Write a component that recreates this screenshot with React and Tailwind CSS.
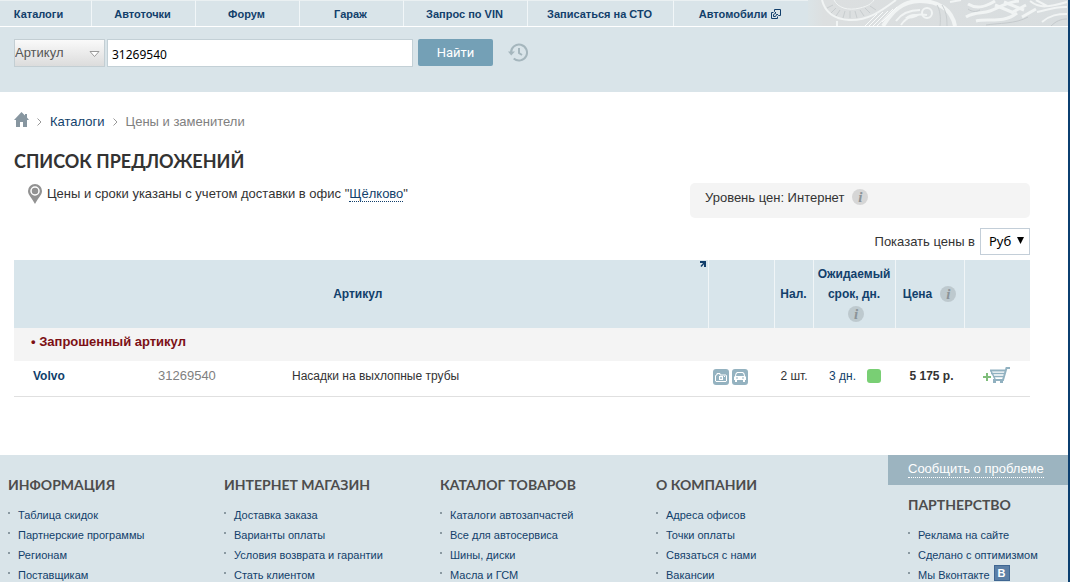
const navItems = [
  { label: "Каталоги", width: "w-[92px] pr-[14px]" },
  { label: "Автоточки", width: "w-[104px]" },
  { label: "Форум", width: "w-[104px]" },
  { label: "Гараж", width: "w-[104px]" },
  { label: "Запрос по VIN", width: "w-[124px]" },
  { label: "Записаться на СТО", width: "w-[146px]" },
  { label: "Автомобили", width: "w-[134px]", external: true },
];

const footerColumns = [
  {
    title: "Информация",
    links: ["Таблица скидок", "Партнерские программы", "Регионам", "Поставщикам"],
  },
  {
    title: "Интернет магазин",
    links: ["Доставка заказа", "Варианты оплаты", "Условия возврата и гарантии", "Стать клиентом"],
  },
  {
    title: "Каталог товаров",
    links: ["Каталоги автозапчастей", "Все для автосервиса", "Шины, диски", "Масла и ГСМ"],
  },
  {
    title: "О компании",
    links: ["Адреса офисов", "Точки оплаты", "Связаться с нами", "Вакансии"],
  },
];

const partnerLinks = ["Реклама на сайте", "Сделано с оптимизмом", "Мы Вконтакте"];

function ExternalIcon() {
  return (
    <svg className="w-[10px] h-[10px]" viewBox="0 0 10 10" fill="none" stroke="#123f6b">
      <path d="M3.500 2.500v-2h6v6h-2" />
      <path d="M2.500 3.500h-2v6h6v-2" />
      <path d="M2.500 7.500v-2L5 4 3.500 2.500M7.500 6.500 6 5 4.500 7.500h-2" />
    </svg>
  );
}

function InfoButton() {
  return (
    <button
      type="button"
      aria-label="Подробнее"
      className="inline-flex items-center justify-center w-4 h-4 rounded-full bg-[#000000]/12 font-['Liberation_Serif',serif] font-bold italic text-[15px] leading-4 text-[#8b9398]"
    >
      i
    </button>
  );
}

function HistoryIcon() {
  return (
    <svg className="w-5 h-[19px]" viewBox="0 0 20 19" fill="none" stroke="#a5b6bd" strokeWidth="2">
      <path d="M3 10.500V9.500a8 8 0 1 1 2.700 6" />
      <path d="M0 8.500h7L3.200 12.500Z" fill="#a5b6bd" stroke="none" />
      <path d="M11 5v5l3 2" />
    </svg>
  );
}

function HeaderArt() {
  return (
    <svg
      className="flex-1 min-w-0 h-[26px]"
      viewBox="0 0 260 26"
      preserveAspectRatio="xMinYMid slice"
      fill="none"
      stroke="#f1f4f4"
    >
      <defs>
        <linearGradient id="artFade">
          <stop offset="0" stopColor="#dbe4e7" />
          <stop offset="0.060" stopColor="#dcdfe0" />
          <stop offset="1" stopColor="#d8dddf" />
        </linearGradient>
      </defs>
      <rect width="260" height="26" fill="url(#artFade)" stroke="none" />
      <path d="M14 0c3 12 12 19 27 20 18 1 31-8 47-20" strokeWidth="2" />
      <path d="M26 0c4 8 14 11 26 8 8-2 11-4 14-8" />
      <path d="M25 5l-6 3M28 8l-5 5M32 10l-4 6M37 11l-2 7M42 11v7M47 11l2 7M52 10l4 6M57 8l5 5M62 6l6 4" stroke="#c8cdcf" />
      <path d="M75 26C84 12 94 1 112 1c19 0 32 9 35 25" strokeWidth="4" />
      <path d="M57 26l12-12M61 26l14-14M65 26l15-15M69 26l16-17M74 22l15-15" stroke="#f8fafa" />
      <path d="M88 21c5-7 12-11 24-11M93 25c6-9 16-12 26-10" strokeWidth="2" />
      <path d="M97 18c4-4 10-5 14-3-3 3-8 4-14 3Z" fill="#f1f4f4" stroke="none" />
      <circle cx="119" cy="13" r="5" strokeWidth="2" />
      <path d="M129 5c3 5 4 12 3 21M134 5c4 6 5 12 5 21" stroke="#c9ced0" />
      <path d="M158 17c10-6 16-3 24-6 10-4 17-9 29-10M160 4c8 5 16 4 27-3M168 21c12-3 27 3 41-8" strokeWidth="3" />
      <path d="M187 5l19 8M196 2l20 8M203 13l15-8M214 17l14-8" strokeWidth="3" />
      <path d="M222 1c10 8 19 6 37 1M229 12c10-2 19-6 30-5M234 22c8-7 16-8 25-8M228 0l11 6" strokeWidth="2" />
      <path d="M160 9c4 3 8 3 12 1M178 25c12-2 30-1 42-8M243 26c5-5 10-7 16-7" stroke="#c5cacd" />
      <path d="M29 21v5M142 2l11-2" strokeWidth="2" />
    </svg>
  );
}

function TopNav() {
  return (
    <nav className="flex h-[27px] border-b border-white text-[11px] font-bold text-[#123f6b]">
      {navItems.map((item) => (
        <a
          key={item.label}
          href="#"
          className={`flex items-center justify-center gap-1 pt-px pr-[2px] border-t border-t-[#eaf0f2] whitespace-nowrap shrink-0 ${item.width} ${
            item.external ? "" : "border-r border-r-[#f1f6f8]"
          }`}
        >
          {item.label}
          {item.external && <ExternalIcon />}
        </a>
      ))}
      <HeaderArt />
    </nav>
  );
}

function SearchForm() {
  return (
    <form className="flex items-center h-[65px] pl-[14px] pb-[14px]">
      <div className="relative">
        <select
          aria-label="Тип поиска"
          className="appearance-none block w-[91px] h-7 border border-[#c3ced3] bg-linear-to-b from-[#fafafa] to-[#dcdcdc] text-[13px] text-[#555]"
        >
          <option>Артикул</option>
        </select>
        <svg className="absolute right-[5px] top-3 w-[11px] h-[7px] pointer-events-none" viewBox="0 0 11 7">
          <path d="M1 .5h9L5.500 5.500Z" fill="#fff" stroke="#999" />
        </svg>
      </div>
      <input
        type="text"
        aria-label="Артикул"
        defaultValue="31269540"
        className="w-[306px] h-7 ml-[2px] px-1 pt-[3px] bg-white border border-[#c3d0d6] font-['Noto_Sans',sans-serif] text-xs text-black"
      />
      <button type="submit" className="w-[75px] h-[27px] ml-[5px] rounded-[2px] bg-[#74a0b6] font-[Roboto,sans-serif] text-[13px] text-white">
        Найти
      </button>
      <button type="button" aria-label="История" className="ml-[15px]">
        <HistoryIcon />
      </button>
    </form>
  );
}

function Chevron() {
  return (
    <svg className="w-[5px] h-2" viewBox="0 0 5 8" fill="none" stroke="#999">
      <path d="M.5.5 4 4 .5 7.500" />
    </svg>
  );
}

function Breadcrumbs() {
  return (
    <div className="flex items-center h-[18px] text-[13px]">
      <a href="#" aria-label="Главная">
        <svg className="w-[15px] h-4 -mt-1" viewBox="0 0 15 16" fill="#8796a0">
          <path d="M7.500 0 11 3.500V2h2v3.500l2 2.500h-2v7H9v-5H6v5H2V8H0Z" />
        </svg>
      </a>
      <span className="mx-2"><Chevron /></span>
      <a href="#" className="text-[#123f6b]">Каталоги</a>
      <span className="mx-2"><Chevron /></span>
      <span className="text-[#808080]">Цены и заменители</span>
    </div>
  );
}

function PhotoIcon() {
  return (
    <svg className="w-4 h-4" viewBox="0 0 16 16">
      <rect width="16" height="16" rx="3" fill="#94b2c0" />
      <path d="M2.500 12V6.500L3 6h1V4.500h3V6h6l.5.500V12l-.5.500H3Z" fill="none" stroke="#fff" />
      <path d="M6 7h4v4H6zM11 7h1v1h-1z" fill="#fff" />
      <path d="M7 8h2v2H7z" fill="#b5cad4" />
    </svg>
  );
}

function CarIcon() {
  return (
    <svg className="w-4 h-4" viewBox="0 0 16 16">
      <rect width="16" height="16" rx="3" fill="#94b2c0" />
      <path d="M5 3h6l1.500 1.500L13 7l1 1v3h-1v2h-2v-2H5v2H3v-2H2V8l1-1 .5-2.500Z" fill="#fff" />
      <path d="M5.500 4h5l1 1 .5 2H4l.5-2ZM4 8.500h2v1H4zM10 8.500h2v1h-2z" fill="#94b2c0" />
    </svg>
  );
}

function CartIcon() {
  return (
    <svg className="w-7 h-[17px]" viewBox="0 0 28 17" fill="none">
      <path d="M0 10h8M4 6v8" stroke="#7fbd7b" strokeWidth="2" />
      <path d="M27 1h-3.500L20 13H10" stroke="#91b1c0" strokeWidth="2" />
      <path d="M7 3.500h15" stroke="#91b1c0" strokeWidth="2" />
      <path d="M8 6.500h13M10 9.500h10M8 4l4 8" stroke="#91b1c0" strokeWidth="1.500" />
      <path d="M10 14h3v2h-3zM17 14h3v2h-3z" fill="#91b1c0" />
    </svg>
  );
}

function OffersTable() {
  return (
    <table className="w-full table-fixed border-collapse text-xs text-[#333]">
      <colgroup>
        <col className="w-[144px]" />
        <col className="w-[134px]" />
        <col />
        <col className="w-[66px]" />
        <col className="w-[39px]" />
        <col className="w-[82px]" />
        <col className="w-[69px]" />
        <col className="w-[66px]" />
      </colgroup>
      <thead>
        <tr className="h-[68px] bg-[#d8e5eb] text-[#123f6b] leading-5">
          <th colSpan={3} className="relative pr-[6px] border-r border-[#f0f5f7]">
            Артикул
            <svg className="absolute right-[2px] top-[1px] w-[6px] h-[6px]" viewBox="0 0 6 6" fill="none" stroke="#123f6b">
              <path d="M0 1h5v5" strokeWidth="2" />
              <path d="M1 5.500 5 1" strokeWidth="1.500" />
            </svg>
          </th>
          <th className="border-r border-[#f0f5f7]"></th>
          <th className="border-r border-[#f0f5f7]">Нал.</th>
          <th className="border-r border-[#f0f5f7]">
            Ожидаемый срок, дн.
            <span className="flex items-center justify-center h-5 pl-1">
              <InfoButton />
            </span>
          </th>
          <th className="border-r border-[#f0f5f7]">
            <span className="flex items-center justify-center gap-2">
              Цена <InfoButton />
            </span>
          </th>
          <th></th>
        </tr>
      </thead>
      <tbody>
        <tr className="h-[33px] bg-[#f4f4f4]">
          <th colSpan={8} className="pl-[17px] pb-[6px] text-left text-[13px] text-[#7c1014]">
            • Запрошенный артикул
          </th>
        </tr>
        <tr className="h-[35px] border-b border-[#e0e0e0]">
          <td className="pl-[19px] pb-[5px]">
            <a href="#" className="font-bold text-[#123f6b]">Volvo</a>
          </td>
          <td className="pb-[5px] text-[13px] text-[#808080]">31269540</td>
          <td className="pb-[5px]">Насадки на выхлопные трубы</td>
          <td>
            <div className="flex gap-[3px] pl-[5px] pb-[3px]">
              <button type="button" aria-label="Фото"><PhotoIcon /></button>
              <button type="button" aria-label="Применимость"><CarIcon /></button>
            </div>
          </td>
          <td className="pl-px pb-[5px] text-center whitespace-nowrap">2 шт.</td>
          <td className="pb-[5px]">
            <div className="flex items-center gap-[11px] pl-4">
              <a href="#" className="text-[#123f6b]">3 дн.</a>
              <span className="w-[14px] h-[14px] rounded-[3px] bg-[#79cf74]" />
            </div>
          </td>
          <td className="pb-[5px] pl-1 text-center font-bold whitespace-nowrap">5 175 р.</td>
          <td>
            <button type="button" aria-label="В корзину" className="block ml-[19px] mb-[6px]">
              <CartIcon />
            </button>
          </td>
        </tr>
      </tbody>
    </table>
  );
}

function FooterLinks({ title, children }) {
  return (
    <div>
      <h2 className="font-[Lato,sans-serif] font-bold text-sm leading-5 uppercase whitespace-nowrap text-[#4d4d4d]">
        {title}
      </h2>
      <ul className="mt-[10px] text-[11px] leading-5 text-[#123f6b]">{children}</ul>
    </div>
  );
}

function FooterLink({ label, children }) {
  return (
    <li className="flex items-center whitespace-nowrap">
      <span className="w-[2px] h-[2px] mr-2 mb-[3px] bg-[#8b9aa2]" />
      <a href="#" className="flex items-center gap-1 h-5">
        {label}
        {children}
      </a>
    </li>
  );
}

function Footer() {
  return (
    <footer className="flex justify-between flex-1 bg-[#d9e4e9]">
      <div className="grid grid-cols-[repeat(4,216px)] pt-5 pl-2">
        {footerColumns.map((col) => (
          <FooterLinks key={col.title} title={col.title}>
            {col.links.map((link) => (
              <FooterLink key={link} label={link} />
            ))}
          </FooterLinks>
        ))}
      </div>
      <div className="w-[180px] shrink-0">
        <div className="h-[30px] pl-5 pt-[5px] bg-[#9cb4c0] text-[13px] leading-[17px]">
          <a href="#" className="inline-block border-b border-dotted border-white text-white">
            Сообщить о проблеме
          </a>
        </div>
        <div className="pl-5 pt-[10px]">
          <FooterLinks title="Партнерство">
            {partnerLinks.map((link) => (
              <FooterLink key={link} label={link}>
                {link === "Мы Вконтакте" && (
                  <span className="flex items-center justify-center w-4 h-4 mb-1 border border-[#3f6692] bg-[#5b7fa6] text-[11px] font-bold text-white">
                    В
                  </span>
                )}
              </FooterLink>
            ))}
          </FooterLinks>
        </div>
      </div>
    </footer>
  );
}

export default function App() {
  return (
    <div className="flex flex-col h-screen overflow-hidden bg-white border-r-2 border-[#0b3f70] font-['Liberation_Sans',Arial,sans-serif]">
      <header className="shrink-0 bg-[#d9e4e9]">
        <TopNav />
        <SearchForm />
      </header>

      <main className="shrink-0 pl-[14px] pr-[38px] pt-[21px] pb-[58px] text-[13px] text-[#333]">
        <Breadcrumbs />
        <h1 className="mt-[18px] font-[Lato,sans-serif] font-bold text-lg leading-6 uppercase">
          Список предложений
        </h1>

        <div className="flex justify-between mt-[10px]">
          <p className="flex items-center gap-[5px] h-[22px] pl-[14px] whitespace-nowrap">
            <svg className="w-[14px] h-5" viewBox="0 0 14 20" fill="#929292">
              <path d="M7 0a7 7 0 0 1 7 7c0 4-4 7-7 13C4 14 0 11 0 7a7 7 0 0 1 7-7Z" />
              <circle cx="7" cy="7" r="4" stroke="#fff" strokeWidth="1.500" />
            </svg>
            <span>
              Цены и сроки указаны с учетом доставки в офис "
              <a href="#" className="border-b border-dotted border-[#123f6b] text-[#123f6b]">Щёлково</a>"
            </span>
          </p>
          <div className="flex items-start gap-2 w-[340px] h-[35px] pl-[15px] pt-[6px] rounded-[5px] bg-[#f4f4f4] leading-[18px]">
            Уровень цен: Интернет <InfoButton />
          </div>
        </div>

        <div className="flex items-center justify-end gap-[5px] mt-[10px] mb-[5px]">
          <label htmlFor="currency">Показать цены в</label>
          <div className="relative">
            <select
              id="currency"
              className="appearance-none block w-[50px] h-[27px] pl-2 border border-[#c3ced8] bg-white font-['Noto_Sans',sans-serif] text-[13px] text-black"
            >
              <option>Руб</option>
            </select>
            <svg className="absolute right-[6px] top-[9px] w-[7px] h-[7px] pointer-events-none" viewBox="0 0 7 7">
              <path d="M0 0h7L3.500 7Z" />
            </svg>
          </div>
        </div>

        <OffersTable />
      </main>

      <Footer />
    </div>
  );
}
